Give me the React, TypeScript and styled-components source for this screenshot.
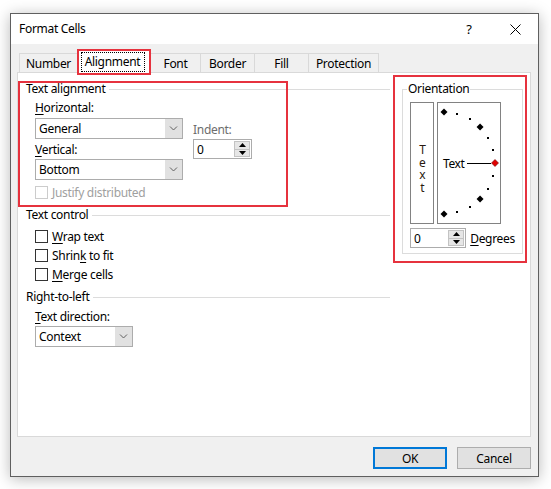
import React from "react";
import styled, { createGlobalStyle } from "styled-components";

const GlobalStyle = createGlobalStyle`
  html, body { margin: 0; padding: 0; background: #ffffff; }
  body {
    font-family: "Noto Sans", "Open Sans", sans-serif;
    font-size: 12px;
    letter-spacing: -0.3px;
    color: #000;
  }
  * { box-sizing: border-box; }
`;

const RED = "#e6323e";

const Page = styled.div`
  width: 551px;
  height: 489px;
  padding: 13px 0 0 10px;
  overflow: hidden;
`;

const Dialog = styled.div`
  width: 529px;
  height: 464px;
  border: 1px solid #5f5f5f;
  background: #f0f0f0;
  box-shadow: 0 2px 14px rgba(0, 0, 0, 0.28);
  display: flex;
  flex-direction: column;
`;

const TitleBar = styled.div`
  height: 30px;
  background: #fff;
  display: flex;
  align-items: center;
  flex-shrink: 0;
`;

const Title = styled.div`
  flex: 1;
  padding-left: 8px;
  font-size: 12px;
  line-height: 16px;
`;

const CaptionButton = styled.div`
  width: 46px;
  height: 30px;
  display: flex;
  align-items: center;
  justify-content: center;
  font-size: 13px;
`;

const Body = styled.div`
  flex: 1;
  display: flex;
  flex-direction: column;
  padding: 6px 7px 7px 6px;
`;

const TabStrip = styled.div`
  display: flex;
  align-items: flex-end;
  height: 22px;
  padding-left: 2px;
  position: relative;
  z-index: 1;
`;

const Tab = styled.div<{ $w: number; $active?: boolean }>`
  position: relative;
  width: ${(p) => p.$w}px;
  height: ${(p) => (p.$active ? 23 : 19)}px;
  margin-bottom: ${(p) => (p.$active ? -1 : 0)}px;
  margin-left: -1px;
  &:first-child { margin-left: 0; }
  border: 1px solid #d9d9d9;
  border-bottom: none;
  background: ${(p) => (p.$active ? "#ffffff" : "#f0f0f0")};
  z-index: ${(p) => (p.$active ? 2 : 1)};
  display: flex;
  align-items: center;
  justify-content: center;
  line-height: 16px;
  padding-top: ${(p) => (p.$active ? 0 : 1)}px;
`;

const FocusRing = styled.span`
  display: flex;
  align-items: center;
  justify-content: center;
  width: 64px;
  height: 20px;
  margin-left: -3px;
  border: 1px dotted #000;
`;

const RedMark = styled.div<{ $l: number; $t: number; $w: number; $h: number }>`
  position: absolute;
  left: ${(p) => p.$l}px;
  top: ${(p) => p.$t}px;
  width: ${(p) => p.$w}px;
  height: ${(p) => p.$h}px;
  border: 2px solid ${RED};
  pointer-events: none;
  z-index: 5;
`;

const Panel = styled.div`
  height: 365px;
  flex-shrink: 0;
  border: 1px solid #d9d9d9;
  background: #ffffff;
  padding: 8px 6px 0 8px;
  display: grid;
  grid-template-columns: 364px 121px;
  column-gap: 12px;
  align-items: start;
`;

const LeftCol = styled.div`
  display: flex;
  flex-direction: column;
`;

const Section = styled.div`
  position: relative;
  display: flex;
  flex-direction: column;
`;

const GroupHeader = styled.div<{ $mt?: number }>`
  display: flex;
  align-items: center;
  height: 16px;
  line-height: 16px;
  margin-top: ${(p) => p.$mt ?? 0}px;
  &::after {
    content: "";
    flex: 1;
    height: 1px;
    background: #dcdcdc;
    margin-left: 4px;
  }
`;

const GroupBody = styled.div`
  padding-left: 9px;
  display: flex;
  flex-direction: column;
`;

const AlignGrid = styled.div`
  display: grid;
  grid-template-columns: 148px auto;
  column-gap: 10px;
  margin-top: 3px;
`;

const Stack = styled.div<{ $pt?: number }>`
  display: flex;
  flex-direction: column;
  padding-top: ${(p) => p.$pt ?? 0}px;
`;

const FieldLabel = styled.div<{ $mt?: number; $muted?: boolean }>`
  height: 16px;
  line-height: 16px;
  margin-top: ${(p) => p.$mt ?? 0}px;
  color: ${(p) => (p.$muted ? "#6d6d6d" : "#000")};
  u { text-decoration: underline; text-underline-offset: 2px; }
`;

const SelectBox = styled.div<{ $w: number; $mt?: number }>`
  width: ${(p) => p.$w}px;
  height: 21px;
  margin-top: ${(p) => p.$mt ?? 0}px;
  border: 1px solid #acacac;
  background: #fff;
  display: flex;
  align-items: stretch;
`;

const SelectValue = styled.div`
  flex: 1;
  padding-left: 3px;
  display: flex;
  align-items: center;
`;

const SelectArrow = styled.div`
  width: 17px;
  background: #e1e1e1;
  display: flex;
  align-items: center;
  justify-content: center;
`;

const Spinner = styled.div<{ $w: number; $mt?: number }>`
  width: ${(p) => p.$w}px;
  height: 20px;
  margin-top: ${(p) => p.$mt ?? 0}px;
  border: 1px solid #acacac;
  background: #fff;
  display: flex;
  align-items: stretch;
`;

const SpinValue = styled.div`
  flex: 1;
  padding-left: 3px;
  display: flex;
  align-items: center;
`;

const SpinButtons = styled.div`
  width: 16px;
  margin: 1px;
  display: flex;
  flex-direction: column;
  border: 1px solid #c3c3c3;
`;

const SpinHalf = styled.div<{ $top?: boolean }>`
  flex: 1;
  background: #e6e6e6;
  display: flex;
  align-items: center;
  justify-content: center;
  border-bottom: ${(p) => (p.$top ? "1px solid #c3c3c3" : "none")};
`;

const CheckRow = styled.div<{ $mt?: number; $disabled?: boolean; $h?: number }>`
  display: flex;
  align-items: center;
  gap: 4px;
  height: ${(p) => p.$h ?? 19}px;
  margin-top: ${(p) => p.$mt ?? 0}px;
  color: ${(p) => (p.$disabled ? "#a0a0a0" : "#000")};
  u { text-decoration: underline; text-underline-offset: 2px; }
`;

const CheckBox = styled.span<{ $disabled?: boolean }>`
  width: 13px;
  height: 13px;
  border: 1px solid ${(p) => (p.$disabled ? "#cccccc" : "#333333")};
  background: #fff;
  flex-shrink: 0;
`;

const RightCol = styled.div`
  position: relative;
`;

const Fieldset = styled.fieldset`
  margin: 0;
  width: 121px;
  padding: 5px 7px 5px 7px;
  border: 1px solid #dcdcdc;
  min-width: 0;
`;

const Legend = styled.legend`
  padding: 0 1px;
  margin-left: -3px;
  line-height: 16px;
  height: 16px;
`;

const OrientRow = styled.div`
  display: flex;
  gap: 3px;
  height: 122px;
`;

const VertBox = styled.div`
  width: 24px;
  height: 122px;
  border: 1px solid #828282;
  display: flex;
  align-items: center;
  justify-content: center;
  color: #2a1a10;
`;

const VertText = styled.span`
  writing-mode: vertical-rl;
  text-orientation: upright;
  letter-spacing: -4.5px;
  line-height: 16px;
  margin-top: 5px;
`;

const DialBox = styled.div`
  width: 64px;
  height: 122px;
  border: 1px solid #828282;
  svg { display: block; }
`;

const DegreesRow = styled.div`
  display: flex;
  align-items: center;
  gap: 4px;
  margin-top: 4px;
  height: 20px;
  u { text-decoration: underline; text-underline-offset: 2px; }
`;

const ButtonRow = styled.div`
  display: flex;
  justify-content: flex-end;
  gap: 10px;
  margin-top: 10px;
`;

const Button = styled.div<{ $primary?: boolean }>`
  width: 74px;
  height: 22px;
  background: #e1e1e1;
  border: ${(p) => (p.$primary ? "2px solid #0078d7" : "1px solid #adadad")};
  display: flex;
  align-items: center;
  justify-content: center;
`;

const Chevron = () => (
  <svg width="9" height="5" viewBox="0 0 9 5">
    <polyline points="1,0.5 4.5,4 8,0.5" fill="none" stroke="#606060" strokeWidth="1" />
  </svg>
);

const Select = ({ w, mt, value }: { w: number; mt?: number; value: string }) => (
  <SelectBox $w={w} $mt={mt}>
    <SelectValue>{value}</SelectValue>
    <SelectArrow>
      <Chevron />
    </SelectArrow>
  </SelectBox>
);

const Spin = ({ w, mt, value }: { w: number; mt?: number; value: string }) => (
  <Spinner $w={w} $mt={mt}>
    <SpinValue>{value}</SpinValue>
    <SpinButtons>
      <SpinHalf $top>
        <svg width="7" height="4" viewBox="0 0 7 4">
          <polygon points="3.5,0 7,4 0,4" fill="#000" />
        </svg>
      </SpinHalf>
      <SpinHalf>
        <svg width="7" height="4" viewBox="0 0 7 4">
          <polygon points="0,0 7,0 3.5,4" fill="#000" />
        </svg>
      </SpinHalf>
    </SpinButtons>
  </Spinner>
);

const Dial = () => {
  const cx = 6;
  const cy = 60;
  const r = 51;
  const marks: React.ReactNode[] = [];
  for (let a = 90; a >= -90; a -= 15) {
    const rad = (a * Math.PI) / 180;
    const x = cx + r * Math.cos(rad);
    const y = cy - r * Math.sin(rad);
    if (a % 45 === 0) {
      const s = 3.5;
      const fill = a === 0 ? "#e00000" : "#000";
      marks.push(
        <polygon
          key={a}
          points={`${x},${y - s} ${x + s},${y} ${x},${y + s} ${x - s},${y}`}
          fill={fill}
          stroke={a === 0 ? "#700000" : "none"}
          strokeWidth={a === 0 ? 0.6 : 0}
        />
      );
    } else {
      marks.push(<rect key={a} x={Math.round(x) - 1} y={Math.round(y) - 1} width="2" height="2" fill="#000" />);
    }
  }
  return (
    <svg width="62" height="120" viewBox="0 0 62 120">
      {marks}
      <text x="5" y="64.5" fontFamily="Noto Sans, sans-serif" fontSize="12" letterSpacing="-0.4" fill="#000">
        Text
      </text>
      <line x1="29" y1="60.5" x2="53" y2="60.5" stroke="#000" strokeWidth="1" />
    </svg>
  );
};

export default function App() {
  return (
    <>
      <GlobalStyle />
      <Page>
        <Dialog>
          <TitleBar>
            <Title>Format Cells</Title>
            <CaptionButton>?</CaptionButton>
            <CaptionButton>
              <svg width="11" height="11" viewBox="0 0 11 11">
                <line x1="0.5" y1="0.5" x2="10.5" y2="10.5" stroke="#000" strokeWidth="1" />
                <line x1="10.5" y1="0.5" x2="0.5" y2="10.5" stroke="#000" strokeWidth="1" />
              </svg>
            </CaptionButton>
          </TitleBar>
          <Body>
            <TabStrip>
              <Tab $w={59}>Number</Tab>
              <Tab $w={74} $active>
                <FocusRing>Alignment</FocusRing>
                <RedMark $l={-1} $t={-2} $w={74} $h={26} />
              </Tab>
              <Tab $w={51}>Font</Tab>
              <Tab $w={55}>Border</Tab>
              <Tab $w={55}>Fill</Tab>
              <Tab $w={71}>Protection</Tab>
            </TabStrip>
            <Panel>
              <LeftCol>
                <Section>
                  <GroupHeader>Text alignment</GroupHeader>
                  <GroupBody>
                    <AlignGrid>
                      <Stack>
                        <FieldLabel>
                          <u>H</u>orizontal:
                        </FieldLabel>
                        <Select w={148} mt={2} value="General" />
                        <FieldLabel $mt={3}>
                          <u>V</u>ertical:
                        </FieldLabel>
                        <Select w={148} mt={1} value="Bottom" />
                        <CheckRow $mt={4} $h={16} $disabled>
                          <CheckBox $disabled />
                          Justify distributed
                        </CheckRow>
                      </Stack>
                      <Stack $pt={22}>
                        <FieldLabel $muted>Indent:</FieldLabel>
                        <Spin w={59} mt={1} value="0" />
                      </Stack>
                    </AlignGrid>
                  </GroupBody>
                  <RedMark $l={-8} $t={0} $w={270} $h={126} />
                </Section>

                <GroupHeader $mt={7}>Text control</GroupHeader>
                <GroupBody>
                  <CheckRow $mt={4}>
                    <CheckBox />
                    <span>
                      <u>W</u>rap text
                    </span>
                  </CheckRow>
                  <CheckRow>
                    <CheckBox />
                    <span>
                      Shrin<u>k</u> to fit
                    </span>
                  </CheckRow>
                  <CheckRow>
                    <CheckBox />
                    <span>
                      <u>M</u>erge cells
                    </span>
                  </CheckRow>
                </GroupBody>

                <GroupHeader $mt={5}>Right-to-left</GroupHeader>
                <GroupBody>
                  <FieldLabel $mt={4}>
                    <u>T</u>ext direction:
                  </FieldLabel>
                  <Select w={98} mt={1} value="Context" />
                </GroupBody>
              </LeftCol>

              <RightCol>
                <Fieldset>
                  <Legend>Orientation</Legend>
                  <OrientRow>
                    <VertBox>
                      <VertText>Text</VertText>
                    </VertBox>
                    <DialBox>
                      <Dial />
                    </DialBox>
                  </OrientRow>
                  <DegreesRow>
                    <Spin w={58} value="0" />
                    <span>
                      <u>D</u>egrees
                    </span>
                  </DegreesRow>
                </Fieldset>
                <RedMark $l={-9} $t={-6} $w={134} $h={188} />
              </RightCol>
            </Panel>
            <ButtonRow>
              <Button $primary>OK</Button>
              <Button>Cancel</Button>
            </ButtonRow>
          </Body>
        </Dialog>
      </Page>
    </>
  );
}
